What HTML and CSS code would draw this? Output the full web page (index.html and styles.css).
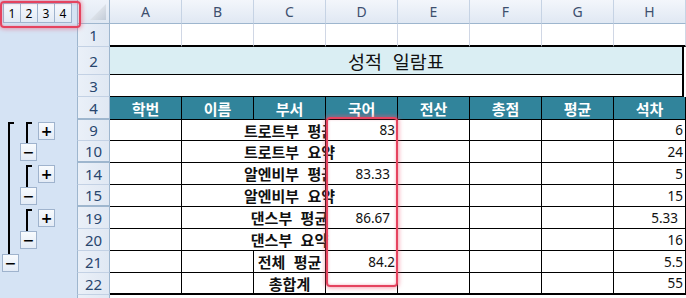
FILE: index.html
```html
<!DOCTYPE html>
<html lang="ko">
<head>
  <meta charset="UTF-8">
  <meta name="viewport" content="width=device-width, initial-scale=1.0">
  <title>성적 일람표</title>
  <link rel="stylesheet" href="styles.css">
</head>
<body>
  <div class="sheet">
    <!-- column headers -->
    <div class="row head">
      <div class="gutter">
        <div class="levels">
          <span class="lvl">1</span><span class="lvl">2</span><span class="lvl">3</span><span class="lvl">4</span>
        </div>
      </div>
      <div class="corner"></div>
      <div class="colhead">A</div>
      <div class="colhead">B</div>
      <div class="colhead">C</div>
      <div class="colhead">D</div>
      <div class="colhead">E</div>
      <div class="colhead">F</div>
      <div class="colhead">G</div>
      <div class="colhead">H</div>
    </div>

    <div class="row r1">
      <div class="gutter"></div>
      <div class="rh">1</div>
      <div class="cell"></div><div class="cell"></div><div class="cell"></div><div class="cell"></div>
      <div class="cell"></div><div class="cell"></div><div class="cell"></div><div class="cell"></div>
    </div>

    <div class="row r2">
      <div class="gutter"></div>
      <div class="rh">2</div>
      <div class="cell merged title">성적 일람표</div>
    </div>

    <div class="row r3">
      <div class="gutter"></div>
      <div class="rh">3</div>
      <div class="cell merged"></div>
    </div>

    <div class="row r4">
      <div class="gutter"></div>
      <div class="rh hidden-below">4</div>
      <div class="cell th">학번</div>
      <div class="cell th">이름</div>
      <div class="cell th">부서</div>
      <div class="cell th">국어</div>
      <div class="cell th">전산</div>
      <div class="cell th">총점</div>
      <div class="cell th">평균</div>
      <div class="cell th">석차</div>
    </div>

    <!-- 트로트부 -->
    <div class="row r9">
      <div class="gutter">
        <div class="track start"></div>
        <div class="track start"></div>
        <div class="track"><span class="ob">+</span></div>
      </div>
      <div class="rh">9</div>
      <div class="cell"></div>
      <div class="cell open"></div>
      <div class="cell name"><span>트로트부 평균</span></div>
      <div class="cell num clip">83</div>
      <div class="cell"></div><div class="cell"></div><div class="cell"></div>
      <div class="cell num">6</div>
    </div>

    <div class="row">
      <div class="gutter">
        <div class="track line"></div>
        <div class="track stub"><span class="ob">&minus;</span></div>
      </div>
      <div class="rh hidden-below">10</div>
      <div class="cell"></div>
      <div class="cell open"></div>
      <div class="cell name"><span>트로트부 요약</span></div>
      <div class="cell num"></div>
      <div class="cell"></div><div class="cell"></div><div class="cell"></div>
      <div class="cell num">24</div>
    </div>

    <!-- 알엔비부 -->
    <div class="row">
      <div class="gutter">
        <div class="track line"></div>
        <div class="track start"></div>
        <div class="track"><span class="ob">+</span></div>
      </div>
      <div class="rh">14</div>
      <div class="cell"></div>
      <div class="cell open"></div>
      <div class="cell name"><span>알엔비부 평균</span></div>
      <div class="cell num clip dec">83.33</div>
      <div class="cell"></div><div class="cell"></div><div class="cell"></div>
      <div class="cell num">5</div>
    </div>

    <div class="row">
      <div class="gutter">
        <div class="track line"></div>
        <div class="track stub"><span class="ob">&minus;</span></div>
      </div>
      <div class="rh hidden-below">15</div>
      <div class="cell"></div>
      <div class="cell open"></div>
      <div class="cell name"><span>알엔비부 요약</span></div>
      <div class="cell num"></div>
      <div class="cell"></div><div class="cell"></div><div class="cell"></div>
      <div class="cell num">15</div>
    </div>

    <!-- 댄스부 -->
    <div class="row">
      <div class="gutter">
        <div class="track line"></div>
        <div class="track start"></div>
        <div class="track"><span class="ob">+</span></div>
      </div>
      <div class="rh">19</div>
      <div class="cell"></div>
      <div class="cell open"></div>
      <div class="cell name"><span>댄스부 평균</span></div>
      <div class="cell num clip dec">86.67</div>
      <div class="cell"></div><div class="cell"></div><div class="cell"></div>
      <div class="cell num dec">5.33</div>
    </div>

    <div class="row">
      <div class="gutter">
        <div class="track line"></div>
        <div class="track stub"><span class="ob">&minus;</span></div>
      </div>
      <div class="rh">20</div>
      <div class="cell"></div>
      <div class="cell open"></div>
      <div class="cell name"><span>댄스부 요약</span></div>
      <div class="cell num"></div>
      <div class="cell"></div><div class="cell"></div><div class="cell"></div>
      <div class="cell num">16</div>
    </div>

    <!-- 전체 -->
    <div class="row">
      <div class="gutter">
        <div class="track stub low"><span class="ob">&minus;</span></div>
      </div>
      <div class="rh">21</div>
      <div class="cell"></div>
      <div class="cell"></div>
      <div class="cell name"><span>전체 평균</span></div>
      <div class="cell num">84.2</div>
      <div class="cell"></div><div class="cell"></div><div class="cell"></div>
      <div class="cell num">5.5</div>
    </div>

    <div class="row r22">
      <div class="gutter"></div>
      <div class="rh">22</div>
      <div class="cell"></div>
      <div class="cell"></div>
      <div class="cell name"><span>총합계</span></div>
      <div class="cell num"></div>
      <div class="cell"></div><div class="cell"></div><div class="cell"></div>
      <div class="cell num">55</div>
    </div>

    <div class="row tail">
      <div class="gutter"></div>
      <div class="rh"></div>
    </div>

    <!-- highlight marks -->
    <div class="mark mark-levels"></div>
    <div class="mark mark-col"></div>
  </div>
</body>
</html>
```

FILE: styles.css
```css
* {
  box-sizing: border-box;
}

body {
  margin: 0;
  background-color: #fff;
  font-family: "Noto Sans", "Noto Sans CJK KR", sans-serif;
  color: #111;
}

.sheet {
  position: relative;
  width: 686px;
  height: 298px;
  overflow: hidden;
}

.row {
  display: flex;
  height: 22px;
}

/* outline gutter */
.gutter {
  width: 77px;
  flex: none;
  display: flex;
  background-color: #d5e3f4;
}

.levels {
  display: flex;
  padding: 3px 0 0 3px;
}

.lvl {
  width: 18px;
  height: 20px;
  margin-right: -1px;
  display: flex;
  align-items: center;
  justify-content: center;
  border: 1px solid #9fb3cd;
  background: linear-gradient(#f6f9fd, #e2eaf5);
  font-size: 12px;
  color: #000;
}

.track {
  width: 18px;
  flex: none;
  padding: 2px 0 0 2px;
}

.track.line {
  background: linear-gradient(#000, #000) 8px 0 / 2px 100% no-repeat;
}

.track.start {
  background:
    linear-gradient(#000, #000) 8px 2px / 2px 100% no-repeat,
    linear-gradient(#000, #000) 8px 2px / 6px 2px no-repeat;
}

.track.stub {
  background: linear-gradient(#000, #000) 8px 0 / 2px 3px no-repeat;
}

.track.low {
  padding-top: 3px;
  background-size: 2px 4px;
}

.ob {
  width: 17px;
  height: 18px;
  display: flex;
  align-items: center;
  justify-content: center;
  border: 1px solid #9fb3cd;
  background: linear-gradient(#f8fbfe, #e3ebf6);
  font-family: "DejaVu Sans", sans-serif;
  font-size: 14px;
  font-weight: bold;
  line-height: 1;
  color: #000;
}

/* headers */
.corner {
  position: relative;
  width: 33px;
  flex: none;
  border-left: 1px solid #9eb6ce;
  border-right: 1px solid #9eb6ce;
  border-bottom: 1px solid #9eb6ce;
  background: linear-gradient(#eef3fa, #dfe7f2);
}

.corner::after {
  content: "";
  position: absolute;
  right: 3px;
  bottom: 3px;
  width: 16px;
  height: 16px;
  background: linear-gradient(135deg, #f4f6f9, #c3ccd8);
  clip-path: polygon(100% 0, 100% 100%, 0 100%);
}

.head {
  height: 24px;
}

.colhead {
  width: 72px;
  flex: none;
  display: flex;
  align-items: center;
  justify-content: center;
  border-right: 1px solid #c6d3e4;
  border-bottom: 1px solid #9eb6ce;
  background: linear-gradient(#f3f6fb, #e0e8f3);
  font-size: 14px;
  color: #3d4f6e;
}

.rh {
  width: 33px;
  flex: none;
  display: flex;
  align-items: center;
  justify-content: center;
  border-left: 1px solid #9eb6ce;
  border-right: 1px solid #9eb6ce;
  border-bottom: 1px solid #c3d1e4;
  background: linear-gradient(90deg, #eaf0f8, #e0e8f3);
  font-size: 15px;
  color: #29466e;
}

.rh.hidden-below {
  border-bottom: 2px solid #9eb6ce;
}

/* cells */
.cell {
  width: 72px;
  flex: none;
  display: flex;
  align-items: center;
  padding: 0 2px;
  border-right: 1px solid #000;
  border-bottom: 1px solid #000;
  font-size: 13.5px;
  white-space: nowrap;
}

.r1 {
  height: 23px;
}

.r1 .cell {
  border-right-color: #d0d7e5;
  border-bottom: 2px solid #000;
}

.r2 {
  height: 28px;
}

.merged {
  width: 574px;
  justify-content: center;
  border-right-width: 2px;
}

.title {
  background-color: #daeef3;
  font-family: "Noto Sans CJK KR", sans-serif;
  font-size: 18.5px;
  word-spacing: 0.3em;
  color: #111;
}

.r4 {
  height: 23px;
}

.th {
  justify-content: center;
  background-color: #31849b;
  color: #fff;
  font-family: "Noto Sans CJK KR", sans-serif;
  font-size: 15px;
  font-weight: bold;
}

.r9 {
  height: 21px;
}

.open {
  border-right: none;
}

.name {
  justify-content: center;
  font-family: "Noto Sans CJK KR", sans-serif;
  font-size: 15px;
  font-weight: bold;
  word-spacing: 0.28em;
}

.num {
  justify-content: flex-end;
}

.num.dec {
  padding-right: 7px;
}

.clip {
  background-color: #fff;
}

.r22 .cell {
  border-bottom-width: 2px;
}

/* highlight marks */
.mark {
  position: absolute;
  border: 2px solid #e5435f;
  border-radius: 4px;
  box-shadow: 0 0 4px 1px rgba(236, 84, 112, 0.55), inset 0 0 3px rgba(236, 84, 112, 0.5);
  pointer-events: none;
}

.mark-levels {
  left: 0;
  top: 1px;
  width: 81px;
  height: 27px;
}

.mark-col {
  left: 326px;
  top: 117px;
  width: 72px;
  height: 170px;
}
```
